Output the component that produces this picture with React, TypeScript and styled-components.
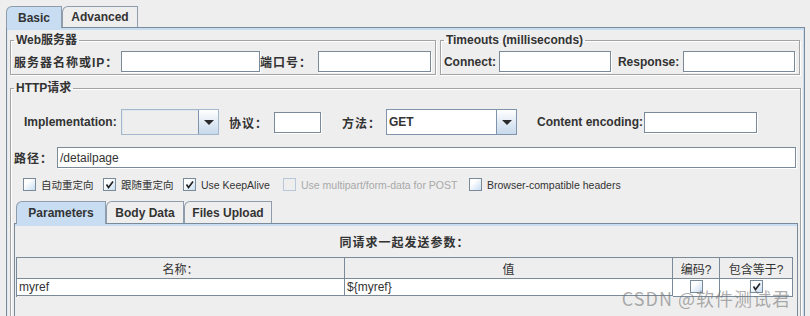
import React from "react";
import styled, { createGlobalStyle } from "styled-components";

const GlobalStyle = createGlobalStyle`
  html, body {
    margin: 0;
    padding: 0;
    background: #eeeeee;
  }
  body {
    font-family: "Liberation Sans", "Noto Sans CJK SC", sans-serif;
    color: #333333;
  }
`;

const Frame = styled.div`
  position: relative;
  box-sizing: border-box;
  width: 810px;
  height: 316px;
  overflow: hidden;
  padding: 6px 0 0 6px;
`;

/* ---- tabs ---- */

const TabStrip = styled.div<{ $ml?: number }>`
  position: relative;
  z-index: 1;
  display: flex;
  height: ${p => (p.$ml ? 22 : 21)}px;
  margin-left: ${p => p.$ml || 0}px;
`;

const Tab = styled.div<{ $active?: boolean; $w: number; $h: number }>`
  box-sizing: border-box;
  display: flex;
  align-items: center;
  justify-content: center;
  width: ${p => p.$w}px;
  height: ${p => p.$h + (p.$active ? 1 : 0)}px;
  border: 1px solid #8e9cab;
  border-bottom: none;
  border-top-left-radius: 6px;
  background: ${p => (p.$active ? "#c8ddf2" : "#eeeeee")};
  font-size: 12px;
  font-weight: bold;
  color: #333333;
`;

const TabPanel = styled.div`
  box-sizing: border-box;
  width: 799px;
  height: 300px;
  border: 1px solid #7a8a99;
  box-shadow: inset 0 2px 0 #c8ddf2, inset 1px 0 0 #dfe8f1, inset -1px 0 0 #c8ddf2;
  padding: 5px 4px 0 3px;
`;

/* ---- groups ---- */

const GroupRow = styled.div`
  display: flex;
  gap: 4px;
`;

const Group = styled.fieldset<{ $w: number; $mt?: number; $pt?: number }>`
  box-sizing: border-box;
  width: ${p => p.$w}px;
  min-width: 0;
  margin: ${p => p.$mt || 0}px 0 0 0;
  padding: ${p => p.$pt || 4}px 4px 2px 3px;
  border: 1px solid #a3a3a3;
  box-shadow: 1px 1px 0 #ffffff, inset 1px 1px 0 #ffffff;
`;

const Legend = styled.legend`
  padding: 0 2px;
  font-size: 12px;
  line-height: 14px;
  font-weight: bold;
  color: #333333;
`;

const Row = styled.div<{ $h: number; $mt?: number; $pl?: number }>`
  display: flex;
  align-items: center;
  height: ${p => p.$h}px;
  margin-top: ${p => p.$mt || 0}px;
  padding-left: ${p => p.$pl || 0}px;
`;

const Label = styled.span<{ $w: number; $ml?: number; $cjk?: boolean }>`
  flex: none;
  width: ${p => p.$w}px;
  margin-left: ${p => p.$ml || 0}px;
  font-size: 12px;
  font-weight: bold;
  letter-spacing: ${p => (p.$cjk ? "1px" : "0")};
  white-space: nowrap;
  color: #333333;
`;

const Field = styled.div<{ $w?: number }>`
  box-sizing: border-box;
  flex: ${p => (p.$w ? "none" : "1")};
  width: ${p => (p.$w ? `${p.$w}px` : "auto")};
  height: 21px;
  display: flex;
  align-items: center;
  padding-left: 2px;
  background: #ffffff;
  border: 1px solid #7a8a99;
  box-shadow: 1px 1px 0 #ffffff;
  font-size: 12px;
  color: #333333;
`;

const Combo = styled.div<{ $w: number; $disabled?: boolean }>`
  box-sizing: border-box;
  display: flex;
  flex: none;
  width: ${p => p.$w}px;
  height: 26px;
  border: 1px solid ${p => (p.$disabled ? "#a3b8cc" : "#7f93ad")};
`;

const ComboValue = styled.div<{ $disabled?: boolean }>`
  flex: 1;
  display: flex;
  align-items: center;
  padding-left: 2px;
  background: ${p => (p.$disabled ? "#eeeeee" : "#ffffff")};
  box-shadow: ${p => (p.$disabled ? "inset 1px 1px 0 #dfe6ee" : "none")};
  font-size: 12px;
  font-weight: bold;
  color: #333333;
`;

const ComboArrow = styled.div`
  flex: none;
  width: 19px;
  display: flex;
  align-items: center;
  justify-content: center;
  border-left: 1px solid #7f93ad;
  background: linear-gradient(#ffffff, #dfe9f4 55%, #c8d9eb);

  &::after {
    content: "";
    border-left: 5px solid transparent;
    border-right: 5px solid transparent;
    border-top: 5px solid #2b2b2b;
  }
`;

/* ---- checkboxes ---- */

const CheckItem = styled.label<{ $w?: number; $disabled?: boolean }>`
  display: flex;
  align-items: center;
  gap: 5px;
  flex: none;
  width: ${p => (p.$w ? `${p.$w}px` : "auto")};
  font-size: 10.5px;
  color: ${p => (p.$disabled ? "#a8a8a8" : "#333333")};
  white-space: nowrap;
`;

const Box = styled.span<{ $disabled?: boolean }>`
  box-sizing: border-box;
  flex: none;
  display: inline-flex;
  align-items: center;
  justify-content: center;
  width: 13px;
  height: 13px;
  border: 1px solid ${p => (p.$disabled ? "#b8c8d8" : "#7a8a99")};
  background: ${p =>
    p.$disabled ? "#eeeeee" : "linear-gradient(135deg, #ffffff 30%, #c8ddf2)"};
`;

const Check = ({ on, disabled }: { on?: boolean; disabled?: boolean }) => (
  <Box $disabled={disabled}>
    {on && (
      <svg width="9" height="9" viewBox="0 0 9 9">
        <path d="M1.5 4.5 L3.5 7.5 L8 1.5" fill="none" stroke="#222" strokeWidth="1.6" />
      </svg>
    )}
  </Box>
);

/* ---- parameters panel ---- */

const InnerPanel = styled.div`
  box-sizing: border-box;
  width: 784px;
  height: 112px;
  border: 1px solid #7a8a99;
  box-shadow: inset 0 2px 0 #c8ddf2;
  padding: 12px 0 0 1px;
`;

const Caption = styled.div`
  text-align: center;
  width: 777px;
  font-size: 12px;
  line-height: 14px;
  font-weight: bold;
  letter-spacing: 1px;
  color: #333333;
`;

const Table = styled.div`
  box-sizing: border-box;
  width: 777px;
  margin-top: 7px;
  display: grid;
  grid-template-columns: 328px 328px 47px 1fr;
  border: 1px solid #7a8a99;
  border-bottom: none;
`;

const HeadCell = styled.div<{ $last?: boolean }>`
  height: 20px;
  display: flex;
  align-items: center;
  justify-content: center;
  border-right: ${p => (p.$last ? "none" : "1px solid #7a8a99")};
  border-bottom: 1px solid #7a8a99;
  background: #eeeeee;
  font-size: 12px;
  color: #333333;
`;

const Cell = styled.div<{ $last?: boolean; $center?: boolean }>`
  height: 16px;
  overflow: hidden;
  display: flex;
  align-items: ${p => (p.$center ? "flex-start" : "center")};
  justify-content: ${p => (p.$center ? "center" : "flex-start")};
  padding: ${p => (p.$center ? "1px 0 0 0" : "0 0 0 2px")};
  border-right: ${p => (p.$last ? "none" : "1px solid #7a8a99")};
  border-bottom: 1px solid #7a8a99;
  background: #ffffff;
  font-size: 12px;
  color: #333333;
`;

const Watermark = styled.div`
  position: absolute;
  right: 19px;
  top: 285px;
  font-family: "Noto Sans CJK SC", "Liberation Sans", sans-serif;
  font-size: 18px;
  letter-spacing: 1px;
  color: rgba(120, 120, 120, 0.6);
  pointer-events: none;
`;

export default function App() {
  return (
    <Frame>
      <GlobalStyle />
      <TabStrip>
        <Tab $active $w={56} $h={21}>Basic</Tab>
        <Tab $w={76} $h={21}>Advanced</Tab>
      </TabStrip>
      <TabPanel>
        <GroupRow>
          <Group $w={427}>
            <Legend>Web服务器</Legend>
            <Row $h={21}>
              <Label $w={107} $cjk>服务器名称或IP：</Label>
              <Field $w={139} />
              <Label $w={58} $cjk>端口号：</Label>
              <Field $w={113} />
            </Row>
          </Group>
          <Group $w={361}>
            <Legend>Timeouts (milliseconds)</Legend>
            <Row $h={21}>
              <Label $w={55}>Connect:</Label>
              <Field $w={112} />
              <Label $w={65} $ml={7}>Response:</Label>
              <Field $w={112} />
            </Row>
          </Group>
        </GroupRow>

        <Group $w={791} $mt={6} $pt={14}>
          <Legend>HTTP请求</Legend>
          <Row $h={26} $pl={10}>
            <Label $w={97}>Implementation:</Label>
            <Combo $w={98} $disabled>
              <ComboValue $disabled />
              <ComboArrow />
            </Combo>
            <Label $w={45} $ml={10} $cjk>协议：</Label>
            <Field $w={47} />
            <Label $w={44} $ml={21} $cjk>方法：</Label>
            <Combo $w={131}>
              <ComboValue>GET</ComboValue>
              <ComboArrow />
            </Combo>
            <Label $w={107} $ml={20}>Content encoding:</Label>
            <Field $w={113} />
          </Row>
          <Row $h={21} $mt={12}>
            <Label $w={43} $cjk>路径：</Label>
            <Field>/detailpage</Field>
          </Row>
          <Row $h={13} $mt={10} $pl={9}>
            <CheckItem $w={80}><Check />自动重定向</CheckItem>
            <CheckItem $w={80}><Check on />跟随重定向</CheckItem>
            <CheckItem $w={100}><Check on />Use KeepAlive</CheckItem>
            <CheckItem $w={186} $disabled><Check disabled />Use multipart/form-data for POST</CheckItem>
            <CheckItem><Check />Browser-compatible headers</CheckItem>
          </Row>
          <Row $h={22} $mt={10}>
            <TabStrip $ml={2}>
              <Tab $active $w={90} $h={22}>Parameters</Tab>
              <Tab $w={78} $h={22}>Body Data</Tab>
              <Tab $w={88} $h={22}>Files Upload</Tab>
            </TabStrip>
          </Row>
          <InnerPanel>
            <Caption>同请求一起发送参数：</Caption>
            <Table>
              <HeadCell>名称：</HeadCell>
              <HeadCell>值</HeadCell>
              <HeadCell>编码?</HeadCell>
              <HeadCell $last>包含等于?</HeadCell>
              <Cell>myref</Cell>
              <Cell>{"${myref}"}</Cell>
              <Cell $center><Check /></Cell>
              <Cell $center $last><Check on /></Cell>
            </Table>
          </InnerPanel>
        </Group>
      </TabPanel>
      <Watermark>CSDN @软件测试君</Watermark>
    </Frame>
  );
}
